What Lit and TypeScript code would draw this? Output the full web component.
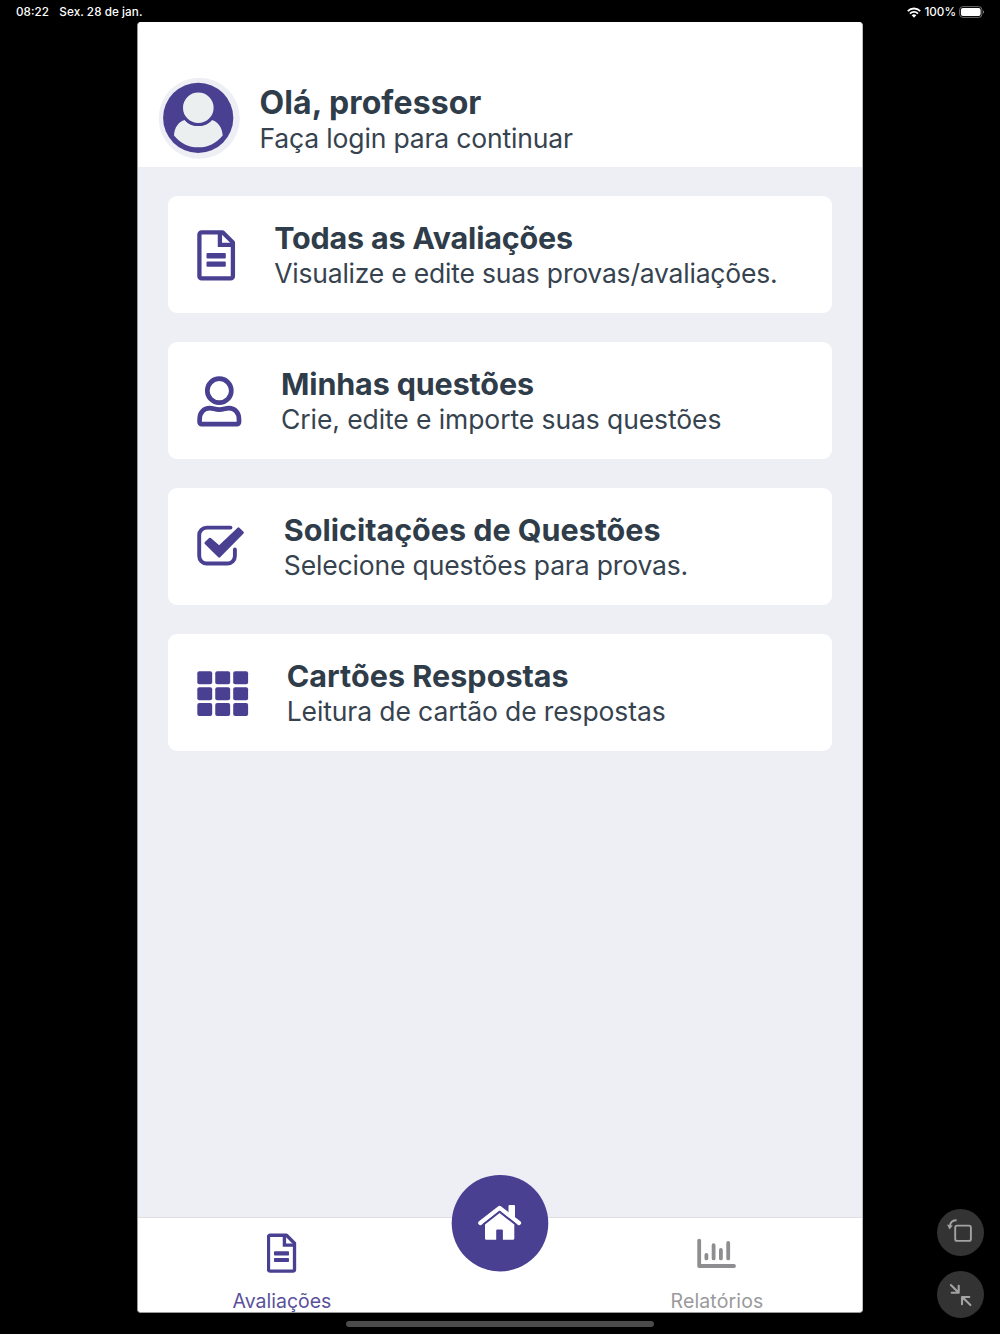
import { LitElement, html, css, svg, nothing } from "lit";
import { customElement, property } from "lit/decorators.js";

const filePaths = svg`
  <path fill="none" stroke="currentColor" stroke-width="4.3" stroke-linejoin="round"
    d="M4.6 2.3H25.6L35.9 12.6V46.2a2.2 2.2 0 0 1-2.2 2.2H4.6a2.2 2.2 0 0 1-2.2-2.2V4.5a2.2 2.2 0 0 1 2.2-2.2Z"/>
  <path fill="none" stroke="currentColor" stroke-width="4.3" d="M22.9 2V14.9H36"/>
  <rect x="9.5" y="23" width="19.3" height="5.4" rx="1" fill="currentColor"/>
  <rect x="9.5" y="31.4" width="19.3" height="5.4" rx="1" fill="currentColor"/>`;

const cells = [0, 1, 2].flatMap((r) =>
  [0, 1, 2].map(
    (c) => svg`<rect x=${0.3 + c * 17.95} y=${0.3 + r * 15.85} width="14.9" height="13" rx="2" fill="currentColor"/>`
  )
);

const icons: Record<string, unknown> = {
  file: html`<svg width="39" height="51" viewBox="0 0 39 51">${filePaths}</svg>`,
  fileSmall: html`<svg width="30" height="40" viewBox="0.5 -0.6 38.6 51.4">${filePaths}</svg>`,
  user: html`<svg width="45" height="51" viewBox="0 0 45 51" fill="none" stroke="currentColor" stroke-width="4.7">
    <circle cx="22.3" cy="14.7" r="12"/>
    <path stroke-linejoin="round" d="M4.6 48.1a2 2 0 0 1-2-2V43.5C2.6 36.5 7 32.2 12.8 32.2C16.2 32.2 17.8 33.6 22.3 33.6S28.4 32.2 31.8 32.2C37.6 32.2 42 36.5 42 43.5V46.1a2 2 0 0 1-2 2Z"/>
  </svg>`,
  check: html`<svg width="48" height="42" viewBox="0 0 48 42">
    <path fill="none" stroke="currentColor" stroke-width="3.9" stroke-linecap="round"
      d="M33.5 2.6H9.6A7.4 7.4 0 0 0 2.2 10V31.1A7.4 7.4 0 0 0 9.6 38.5H30.5A7.4 7.4 0 0 0 37.9 31.1V24.5"/>
    <path fill="currentColor" stroke="currentColor" stroke-width="2.6" stroke-linejoin="round"
      d="M8.8 18L13 14L22.2 22L41.5 3.6L45.6 7.6L22.2 31.4Z"/>
  </svg>`,
  grid: html`<svg width="52" height="46" viewBox="0 0 52 46">${cells}</svg>`,
  chart: html`<svg width="40" height="31" viewBox="0 0 40 31" fill="none" stroke="currentColor" stroke-width="3.8" stroke-linecap="round" stroke-linejoin="round">
    <path d="M2.2 2.6V28H37"/><path d="M9.4 16.8V20.4M16.6 7.2V20.4M23.9 12V20.4M31.2 4.9V20.4"/>
  </svg>`,
  home: html`<svg width="98" height="98" viewBox="0 0 98 98">
    <circle cx="49" cy="49.2" r="48.3" fill="#4a4092"/>
    <g transform="translate(26.4 31)" fill="currentColor">
      <path d="M31.1 1a1 1 0 0 1 1-1h4.5a1 1 0 0 1 1 1V14L31.1 9Z"/>
      <path fill="none" stroke="currentColor" stroke-width="4.2" stroke-linecap="round" stroke-linejoin="round" d="M2.9 18L22.2 2.9L41.6 18"/>
      <path d="M7.6 19.5L22.2 8L36.9 19.5V33.4a1.4 1.4 0 0 1-1.4 1.4H25.5V25.6a1.2 1.2 0 0 0-1.2-1.2H20a1.2 1.2 0 0 0-1.2 1.2V34.8H9a1.4 1.4 0 0 1-1.4-1.4Z"/>
      <path fill="none" stroke="#4a4092" stroke-width="1.3" d="M5.6 19.6L22.2 6.6L38.8 19.6"/>
    </g>
  </svg>`,
  avatar: html`<svg width="83" height="83" viewBox="0 0 83 83">
    <circle cx="41.2" cy="41.3" r="40.6" fill="#eeeff5"/>
    <circle cx="40.2" cy="40.9" r="35.1" fill="#4a4092"/>
    <path fill="#ebeff0" d="M26.8 42.9C33 51.2 47.5 51.2 53.8 42.9C60 44.5 64.3 50.5 64.7 58.4C58 66.5 50 70.3 40.3 70.3S22.6 66.5 16 58.4C16.4 50.5 20.5 44.5 26.8 42.9Z"/>
    <circle cx="40.3" cy="30.7" r="16.8" fill="#ebeff0" stroke="#4a4092" stroke-width="3"/>
  </svg>`,
  wifi: html`<svg width="14" height="11" viewBox="0 0 14 11" fill="none" stroke="#fff" stroke-width="1.8">
    <path d="M0.8 4.1A8.7 8.7 0 0 1 13.2 4.1"/><path d="M3 6.6A5.6 5.6 0 0 1 11 6.6"/>
    <path fill="#fff" stroke="none" d="M7 10.7L4.7 8.3A3.3 3.3 0 0 1 9.3 8.3Z"/>
  </svg>`,
  battery: html`<svg width="26" height="12" viewBox="0 0 26 12">
    <rect x="0.6" y="0.6" width="22.3" height="10.8" rx="3.2" fill="none" stroke="#6b6b6b" stroke-width="1"/>
    <rect x="1.9" y="1.9" width="19.7" height="8.2" rx="2" fill="#fff"/>
    <path fill="#777" d="M24 4.2A2 2 0 0 1 24 7.8Z"/>
  </svg>`,
  rotate: html`<svg class="over" width="26" height="24" viewBox="0 0 26 24" fill="none" stroke="#a3a3a3" stroke-width="1.9">
    <rect x="7.2" y="5.6" width="15.7" height="15.3" rx="2"/>
    <path d="M8.6 0.3C5 0.3 2.6 2 2 5.4"/><path fill="#a3a3a3" stroke="none" d="M-0.9 4.6L4.8 5.4L1.5 9.4Z"/>
  </svg>`,
  shrink: html`<svg class="over" width="24" height="24" viewBox="0 0 24 24" fill="none" stroke="#a3a3a3" stroke-width="2.1" stroke-linecap="round" stroke-linejoin="round">
    <path d="M1.9 2L9.2 9.3M2.7 9.7H9.7V2.8"/><path d="M21.4 22.1L13.8 14.5M13 21.3V14H20.3"/>
  </svg>`,
};

@customElement("menu-card")
class MenuCard extends LitElement {
  @property() icon = "";
  @property() heading = "";
  @property() detail = "";
  static styles = css`
    :host { display: flex; align-items: flex-start; box-sizing: border-box; height: 117px; padding-left: 29px;
      background: #fff; border-radius: 9px; color: #2f3c49; }
    .icon { flex: none; color: #4a4092; line-height: 0; }
    svg { display: block; }
    .file { width: 77.2px; padding-top: 34px; }
    .user { width: 84px; padding-top: 34px; }
    .check { width: 86.8px; padding-top: 37px; }
    .grid { width: 89.7px; padding-top: 37px; }
    .text { padding-top: 22.5px; white-space: nowrap; }
    .heading { font-size: 30.5px; line-height: 38px; font-weight: 700; }
    .detail { font-size: 26.5px; line-height: 34px; margin-top: -0.5px; color: #36434f; }
    .file + .text .heading { letter-spacing: -0.2px; }
    .file + .text .detail { letter-spacing: -0.21px; }
    .user + .text .heading { letter-spacing: -0.14px; }
    .user + .text .detail { letter-spacing: -0.09px; }
    .check + .text .heading { letter-spacing: -0.01px; }
    .check + .text .detail { letter-spacing: -0.15px; }
    .grid + .text .heading { letter-spacing: 0.04px; }
    .grid + .text .detail { letter-spacing: -0.11px; }
  `;
  render() {
    return html`<div class="icon ${this.icon}">${icons[this.icon] ?? nothing}</div>
      <div class="text"><div class="heading">${this.heading}</div><div class="detail">${this.detail}</div></div>`;
  }
}

@customElement("app-root")
class AppRoot extends LitElement {
  static styles = css`
    :host { display: grid; grid-template-columns: 137px 726px 137px; grid-template-rows: 22px 1291px 21px;
      width: 1000px; height: 1334px; background: #000; font-family: Inter, "Liberation Sans", sans-serif; }
    svg { display: block; }
    .over { overflow: visible; }
    .status { grid-column: 1 / 4; display: flex; align-items: center; padding: 2px 15px 0 16px; color: #fff;
      font-size: 11.7px; font-weight: 500; white-space: nowrap; }
    .date { margin-left: 10.5px; flex: 1; letter-spacing: 0.06px; }
    .pct { margin: 0 3px 0 3px; }
    .window { grid-column: 2; grid-row: 2; display: flex; flex-direction: column; box-sizing: border-box;
      border: solid #999; border-width: 0 1px 1px; border-right-color: #bbb; border-radius: 4px; overflow: hidden; background: #eeeff5; }
    .header { display: flex; box-sizing: border-box; height: 145px; flex: none; padding: 55px 0 0 20px; background: #fff; color: #2f3c49; }
    .greet { margin-left: 18.5px; padding-top: 7px; white-space: nowrap; }
    .hello { font-size: 32px; line-height: 38px; font-weight: 700; letter-spacing: 0.08px; }
    .hint { font-size: 26.5px; line-height: 34px; margin-top: -1px; letter-spacing: -0.16px; color: #36434f; }
    .list { flex: 1; display: flex; flex-direction: column; gap: 29px; padding: 29px 30px 0; }
    .nav { flex: none; height: 95px; box-sizing: border-box; border-top: 1px solid #e0e0e3; background: #fff;
      display: grid; grid-template-columns: 288px 1fr 290px; }
    .tab { display: flex; flex-direction: column; align-items: center; font-size: 19.5px; line-height: 24px; }
    .tab span { margin-top: auto; margin-bottom: -1px; white-space: nowrap; }
    .active { color: #4a4092; padding-top: 15px; }
    .active span { color: #5a519b; }
    .idle { color: #8e8e90; padding-top: 20px; }
    .idle span { color: #9a9a9c; letter-spacing: 0.15px; }
    .fab { justify-self: center; width: 98px; height: 98px; margin: -44px 0 0 2px; color: #fff; }
    .side { grid-column: 3; grid-row: 2; display: flex; flex-direction: column; justify-content: flex-end; align-items: flex-end;
      gap: 15.5px; padding: 0 16px; margin-bottom: -5px; }
    .round { display: flex; align-items: center; justify-content: center; width: 47px; height: 47px; border-radius: 50%; background: #333; }
    .indicator { grid-column: 2; grid-row: 3; justify-self: center; width: 308px; height: 6px; margin-top: 8px; border-radius: 3px; background: #4b4b4b; }
  `;
  render() {
    return html`
      <div class="status"><span>08:22</span><span class="date">Sex. 28 de jan.</span>${icons.wifi}<span class="pct">100%</span>${icons.battery}</div>
      <div class="window">
        <div class="header">${icons.avatar}
          <div class="greet"><div class="hello">Olá, professor</div><div class="hint">Faça login para continuar</div></div>
        </div>
        <div class="list">
          <menu-card icon="file" heading="Todas as Avaliações" detail="Visualize e edite suas provas/avaliações."></menu-card>
          <menu-card icon="user" heading="Minhas questões" detail="Crie, edite e importe suas questões"></menu-card>
          <menu-card icon="check" heading="Solicitações de Questões" detail="Selecione questões para provas."></menu-card>
          <menu-card icon="grid" heading="Cartões Respostas" detail="Leitura de cartão de respostas"></menu-card>
        </div>
        <div class="nav">
          <div class="tab active">${icons.fileSmall}<span>Avaliações</span></div>
          <div class="fab">${icons.home}</div>
          <div class="tab idle">${icons.chart}<span>Relatórios</span></div>
        </div>
      </div>
      <div class="side"><div class="round">${icons.rotate}</div><div class="round">${icons.shrink}</div></div>
      <div class="indicator"></div>`;
  }
}
